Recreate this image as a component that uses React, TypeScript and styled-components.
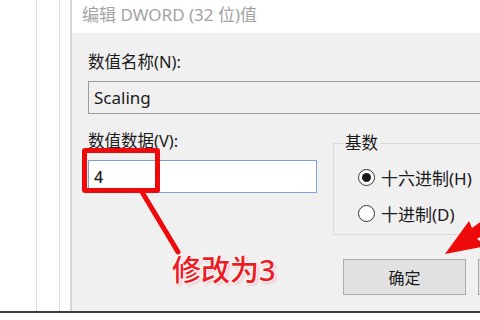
import styled, { createGlobalStyle } from "styled-components";

const GlobalStyle = createGlobalStyle`
  html, body { margin: 0; padding: 0; background: #fff; }
  body {
    width: 480px;
    height: 320px;
    overflow: hidden;
    font-family: "Noto Sans", "Noto Sans CJK SC", sans-serif;
    color: #1a1a1a;
  }
`;

const Screen = styled.div`
  position: relative;
  width: 480px;
  height: 320px;
  overflow: hidden;
  display: flex;
  flex-direction: column;
`;

const Main = styled.div`
  display: flex;
  height: 313px;
`;

const TreePane = styled.div`
  width: 70px;
  flex-shrink: 0;
  display: flex;
  background: #fff;
`;

const Guide = styled.div<{ $offset: number }>`
  width: 0;
  margin-left: ${(p) => p.$offset}px;
  border-left: 1px dotted #c4c4c4;
`;

const Dialog = styled.div`
  flex: 1;
  display: flex;
  flex-direction: column;
  border-left: 2px solid #d6d6d6;
  min-width: 0;
`;

const TitleBar = styled.div`
  height: 33px;
  flex-shrink: 0;
  background: #fff;
  padding-left: 10px;
  display: flex;
  align-items: center;
  padding-bottom: 7px;
  box-sizing: border-box;
  font-size: 17px;
  color: #a3a3a3;
  white-space: nowrap;
`;

const Body = styled.div`
  flex: 1;
  background: #f0f0f0;
  padding: 20px 0 0 16px;
`;

const Label = styled.div<{ $top: number }>`
  margin-top: ${(p) => p.$top}px;
  font-size: 16.5px;
  line-height: 18px;
  white-space: nowrap;
`;

const NameField = styled.div`
  margin-top: 10px;
  width: 420px;
  height: 33px;
  box-sizing: border-box;
  border: 1px solid #9c9c9c;
  background: #f0f0f0;
  padding-left: 5px;
  display: flex;
  align-items: center;
  font-size: 17px;
`;

const Row = styled.div`
  display: flex;
  gap: 16px;
`;

const Column = styled.div`
  display: flex;
  flex-direction: column;
  flex-shrink: 0;
`;

const DataFieldWrap = styled.div`
  position: relative;
  margin-top: 10px;
`;

const DataField = styled.div`
  width: 229px;
  height: 33px;
  box-sizing: border-box;
  border: 1px solid #7ba2d0;
  background: #fff;
  padding-left: 5px;
  display: flex;
  align-items: center;
  font-size: 16px;
  font-weight: 500;
`;

const RedBox = styled.div`
  position: absolute;
  left: -6px;
  top: -12px;
  width: 78px;
  height: 45px;
  box-sizing: border-box;
  border: 5px solid #ee0a0a;
  border-radius: 3px;
`;

const GroupBox = styled.fieldset`
  margin: 20px 0 0 0;
  width: 170px;
  box-sizing: border-box;
  border: 1px solid #dadada;
  padding: 7px 0 3px 24px;
  min-width: 0;
`;

const Legend = styled.legend`
  margin-left: -15px;
  padding: 0 2px;
  font-size: 16.5px;
  line-height: 18px;
`;

const RadioRow = styled.label`
  height: 36px;
  display: flex;
  align-items: center;
  gap: 6px;
  font-size: 17px;
  white-space: nowrap;
`;

const RadioDot = styled.span<{ $checked?: boolean }>`
  width: 17px;
  height: 17px;
  flex-shrink: 0;
  box-sizing: border-box;
  border-radius: 50%;
  border: 1px solid #333;
  background: #fff;
  display: flex;
  align-items: center;
  justify-content: center;
  &::after {
    content: "";
    width: 9px;
    height: 9px;
    border-radius: 50%;
    background: ${(p) => (p.$checked ? "#1a1a1a" : "transparent")};
  }
`;

const Buttons = styled.div`
  display: flex;
  gap: 12px;
  margin: 24px 0 0 10px;
`;

const Button = styled.div`
  width: 123px;
  height: 36px;
  flex-shrink: 0;
  box-sizing: border-box;
  border: 1px solid #adadad;
  background: #e1e1e1;
  display: flex;
  align-items: center;
  justify-content: center;
  font-size: 16px;
`;

const BottomBar = styled.div`
  height: 7px;
  border-top: 2px solid #3c3c3c;
  background: #fff;
`;

const Overlay = styled.svg`
  position: absolute;
  left: 0;
  top: 0;
  pointer-events: none;
`;

const Callout = styled.div`
  position: absolute;
  left: 172px;
  top: 252px;
  font-size: 29px;
  line-height: 36px;
  font-weight: 500;
  color: #ec1c24;
  white-space: nowrap;
  text-shadow: 0 0 2px #fff, 1px 1px 2px #fff, -1px -1px 2px #fff, 2px 2px 3px #f3b0b0;
`;

export default function App() {
  return (
    <Screen>
      <GlobalStyle />
      <Main>
        <TreePane>
          <Guide $offset={36} />
          <Guide $offset={22} />
        </TreePane>
        <Dialog>
          <TitleBar>编辑 DWORD (32 位)值</TitleBar>
          <Body>
            <Label $top={0}>数值名称(N):</Label>
            <NameField>Scaling</NameField>
            <Row>
              <Column>
                <Label $top={18}>数值数据(V):</Label>
                <DataFieldWrap>
                  <DataField>4</DataField>
                  <RedBox />
                </DataFieldWrap>
              </Column>
              <Column>
                <GroupBox>
                  <Legend>基数</Legend>
                  <RadioRow>
                    <RadioDot $checked />
                    十六进制(H)
                  </RadioRow>
                  <RadioRow>
                    <RadioDot />
                    十进制(D)
                  </RadioRow>
                </GroupBox>
                <Buttons>
                  <Button>确定</Button>
                  <Button aria-label="取消" />
                </Buttons>
              </Column>
            </Row>
          </Body>
        </Dialog>
      </Main>
      <BottomBar />
      <Overlay width="480" height="320" viewBox="0 0 480 320">
        <line x1="142" y1="192" x2="178" y2="252" stroke="#ee0a0a" strokeWidth="5" strokeLinecap="round" />
        <polygon points="445,254 469,221 472,228 486,218 490,230 477,239 486,246" fill="#ee0a0a" />
      </Overlay>
      <Callout>修改为3</Callout>
    </Screen>
  );
}
